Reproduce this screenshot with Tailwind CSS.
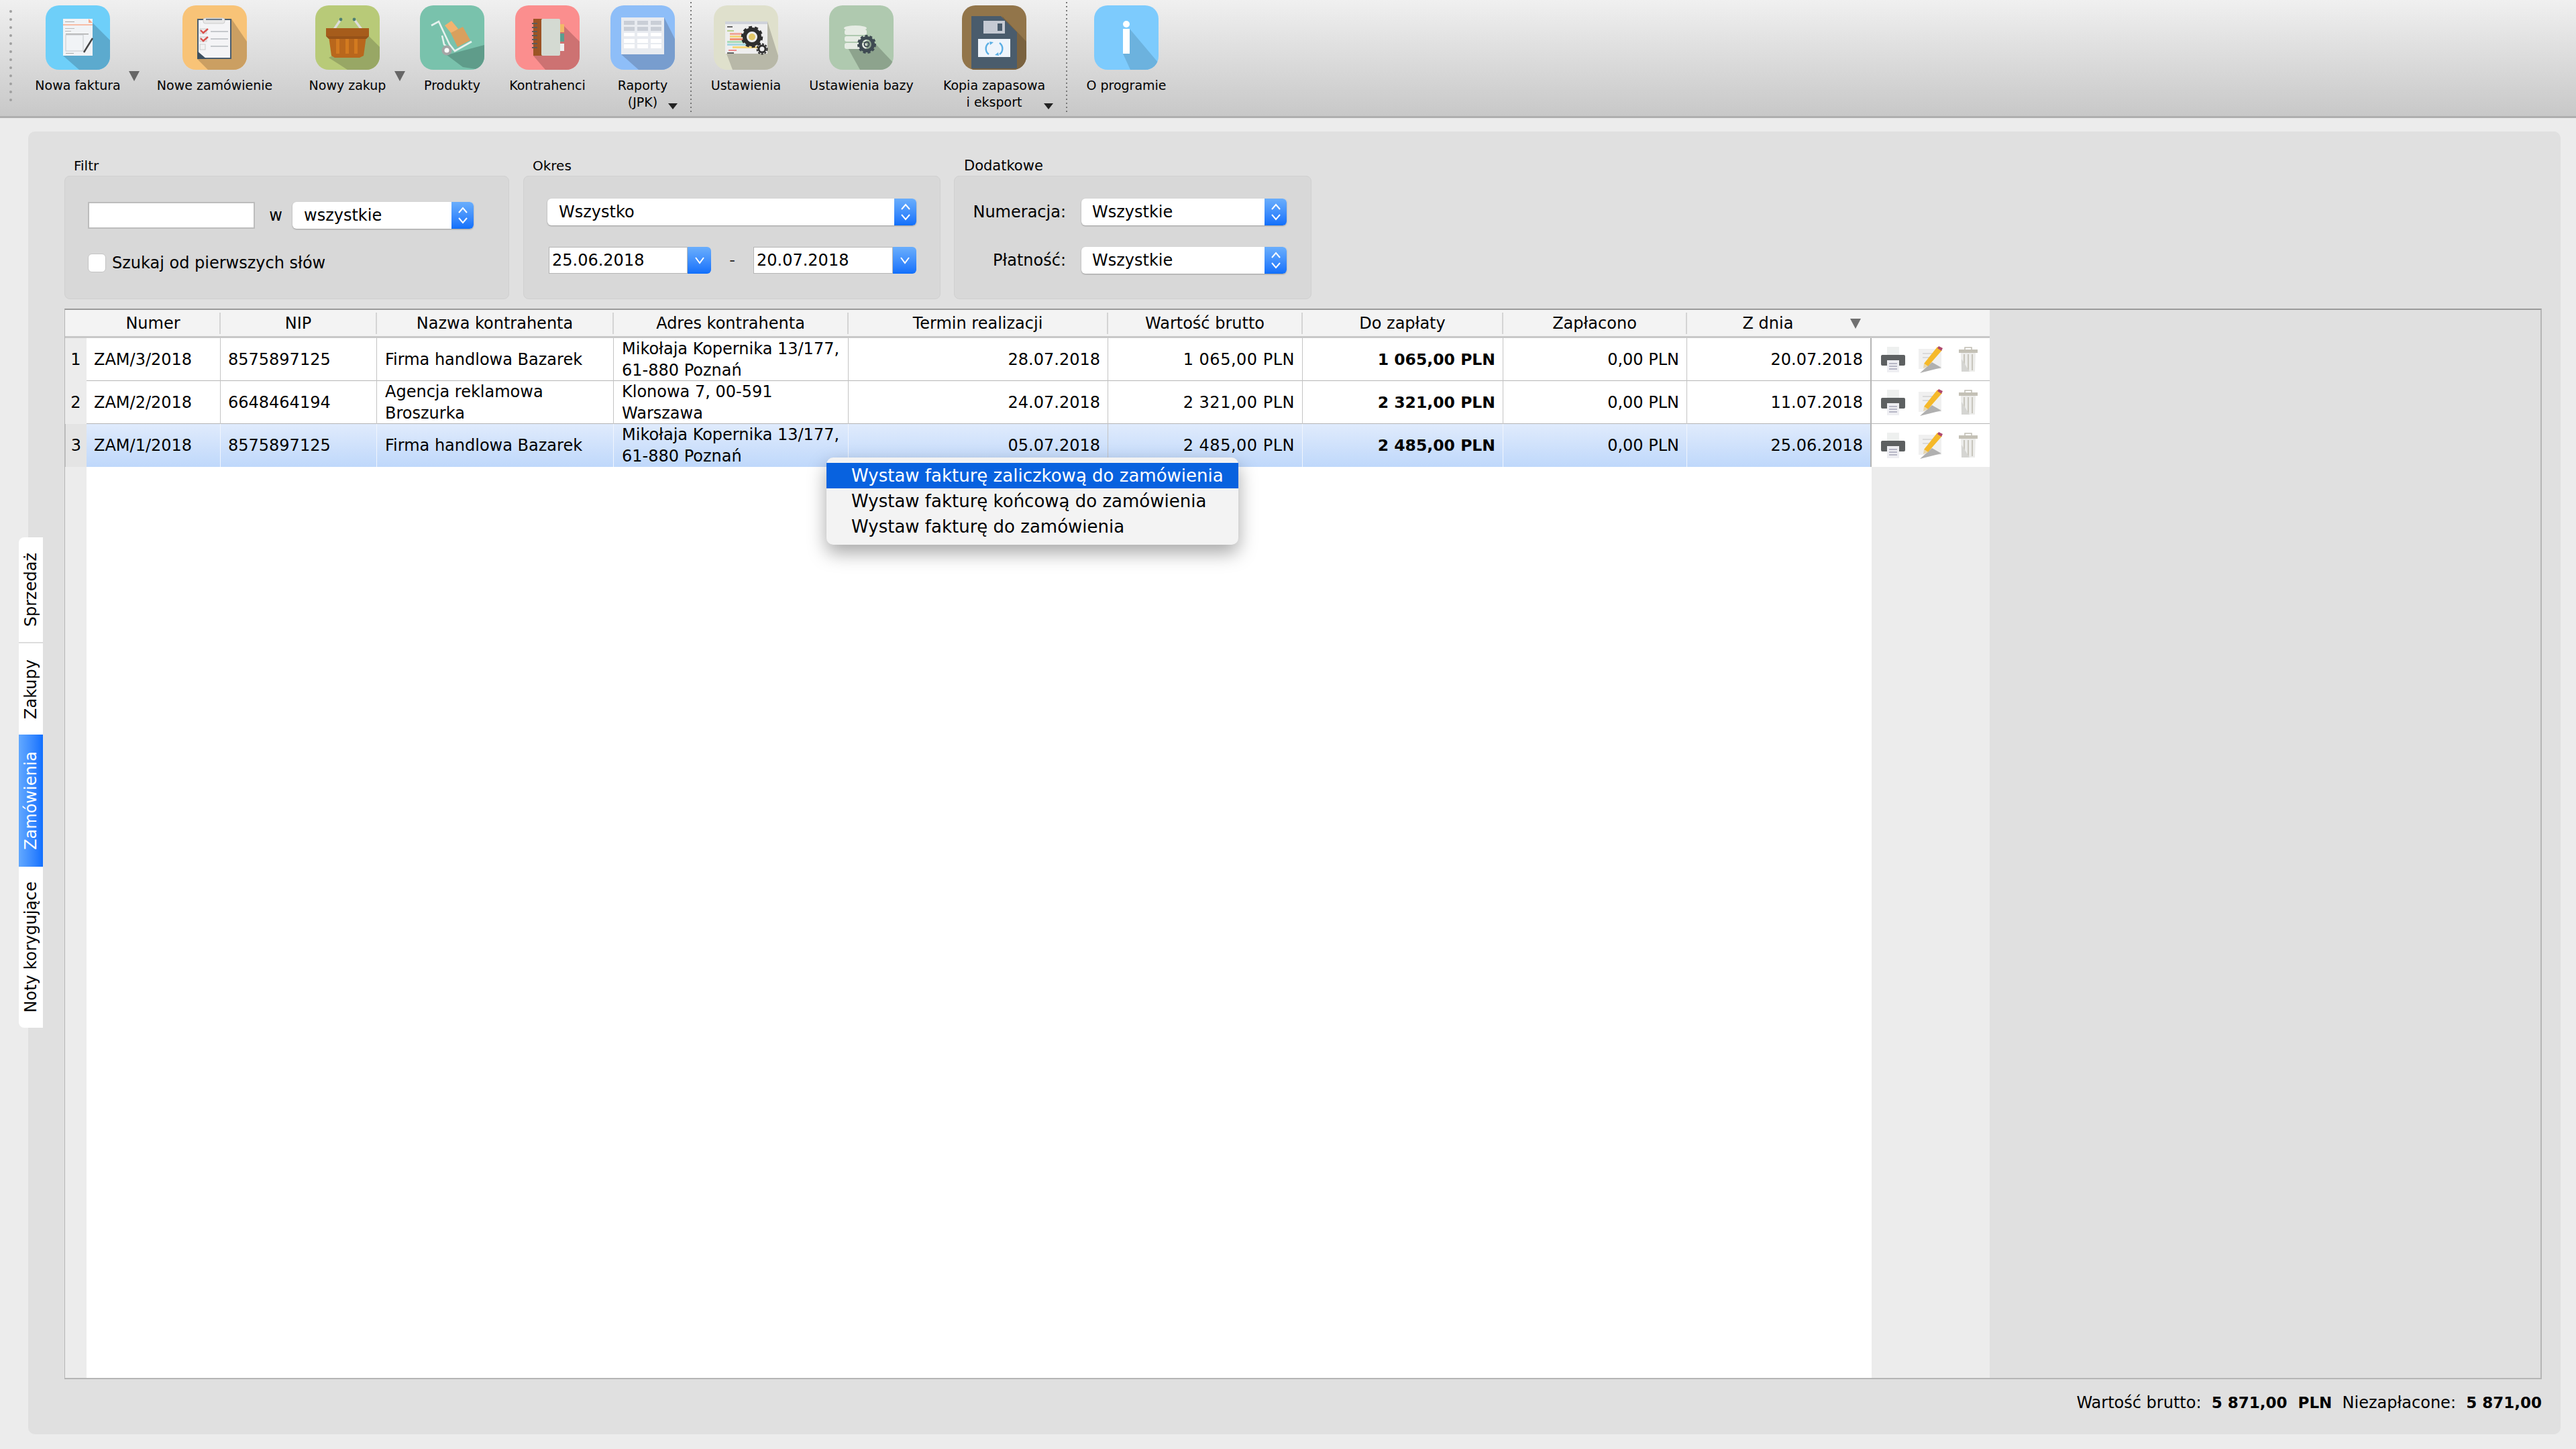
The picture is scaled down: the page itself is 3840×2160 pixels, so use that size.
<!DOCTYPE html>
<html lang="pl">
<head>
<meta charset="utf-8">
<title>Zamówienia</title>
<script src="https://cdn.jsdelivr.net/npm/@tailwindcss/browser@4"></script>
</head>
<body class="w-[3840px] h-[2160px] bg-[#ececec] overflow-hidden font-['DejaVu_Sans',sans-serif] text-[24px] text-black">

<!-- TOOLBAR -->
<div class="flex items-start h-[176px] pl-[14px] pt-[8px] bg-gradient-to-b from-[#f0f0f0] to-[#c8c8c8] border-b-[3px] border-[#aeaeae] text-[19px] leading-[25px]">
  <svg class="w-[4px] h-[140px] mt-[6px]" viewBox="0 0 4 140"><g fill="#a0a0a0"><circle cx="2" cy="3" r="2"/><circle cx="2" cy="15" r="2"/><circle cx="2" cy="27" r="2"/><circle cx="2" cy="39" r="2"/><circle cx="2" cy="51" r="2"/><circle cx="2" cy="63" r="2"/><circle cx="2" cy="75" r="2"/><circle cx="2" cy="87" r="2"/><circle cx="2" cy="99" r="2"/><circle cx="2" cy="111" r="2"/><circle cx="2" cy="123" r="2"/><circle cx="2" cy="135" r="2"/></g></svg>

  <div class="relative w-[96px] ml-[50px] flex flex-col items-center">
    <svg class="w-[96px] h-[96px] rounded-[20px]" viewBox="0 0 96 96"><rect width="96" height="96" fill="#6ecff9"/><polygon points="70,26 96,52 96,96 50,96 26,75" fill="#5caace"/><rect x="26" y="20" width="44" height="55" fill="#f1f3f6"/><polygon points="64,20 70,26 64,26" fill="#f7a88a"/><rect x="26" y="28" width="44" height="2" fill="#f7bda6"/><rect x="29" y="24" width="14" height="1" fill="#aaa"/><rect x="29" y="34" width="14" height="1" fill="#bbb"/><rect x="29" y="38" width="9" height="1" fill="#bbb"/><rect x="30" y="42" width="34" height="1.5" fill="#aaa"/><rect x="30" y="44" width="26" height="24" fill="none" stroke="#c5c8cc"/><rect x="30" y="71" width="12" height="1" fill="#aaa"/><line x1="70" y1="49" x2="57" y2="70" stroke="#444" stroke-width="2.4"/></svg>
    <div class="mt-[11px] whitespace-nowrap text-center">Nowa faktura</div>
    <div class="absolute left-[124px] top-[98px] w-0 h-0 border-l-[8px] border-r-[8px] border-t-[15px] border-l-transparent border-r-transparent border-t-[#666]"></div>
  </div>

  <div class="w-[96px] ml-[108px] flex flex-col items-center">
    <svg class="w-[96px] h-[96px] rounded-[20px]" viewBox="0 0 96 96"><rect width="96" height="96" fill="#f8c377"/><polygon points="73,20 96,54 96,96 38,96 22,80" fill="#cb9f62"/><rect x="23" y="21" width="49" height="58" fill="#f4f4f6" stroke="#4a5d6e" stroke-width="2"/><rect x="31" y="19" width="32" height="8" rx="3" fill="#e8e8e8" stroke="#ccc"/><rect x="35" y="20" width="24" height="2" fill="#6b7b8c"/><rect x="26" y="35" width="10" height="7" fill="#eee" stroke="#ccc"/><rect x="26" y="47" width="10" height="7" fill="#eee" stroke="#ccc"/><rect x="26" y="58" width="8" height="8" fill="#f2f2f2" stroke="#ccc"/><path d="M27 37l4 4 7-6M27 49l4 4 7-6" fill="none" stroke="#d8504c" stroke-width="2.4"/><rect x="42" y="38" width="26" height="2" fill="#c5c8cc"/><rect x="42" y="49" width="26" height="2" fill="#c5c8cc"/><rect x="42" y="60" width="26" height="2" fill="#c5c8cc"/><polygon points="22,68 22,80 36,80" fill="#3d5060"/></svg>
    <div class="mt-[11px] whitespace-nowrap text-center">Nowe zamówienie</div>
  </div>

  <div class="relative w-[96px] ml-[102px] flex flex-col items-center">
    <svg class="w-[96px] h-[96px] rounded-[20px]" viewBox="0 0 96 96"><rect width="96" height="96" fill="#b8ca78"/><polygon points="80,46 96,62 96,96 48,96 20,78" fill="#98a765"/><line x1="27" y1="37" x2="38" y2="21" stroke="#dcdcdc" stroke-width="3.4"/><line x1="70" y1="37" x2="58" y2="21" stroke="#dcdcdc" stroke-width="3.4"/><circle cx="38" cy="21" r="2.4" fill="#4d7f72"/><circle cx="58" cy="21" r="2.4" fill="#4d7f72"/><polygon points="20,46 76,46 72,75 66,78 29,78 24,75" fill="#b9671c"/><rect x="16" y="34" width="64" height="12" fill="#a65c1b"/><polygon points="16,46 80,46 76,50 20,50" fill="#965218"/><rect x="31" y="50" width="5" height="22" fill="#d27a20"/><rect x="45" y="50" width="5" height="22" fill="#d27a20"/><rect x="58" y="50" width="5" height="22" fill="#d27a20"/></svg>
    <div class="mt-[11px] whitespace-nowrap text-center">Nowy zakup</div>
    <div class="absolute left-[118px] top-[98px] w-0 h-0 border-l-[8px] border-r-[8px] border-t-[15px] border-l-transparent border-r-transparent border-t-[#666]"></div>
  </div>

  <div class="w-[96px] ml-[60px] flex flex-col items-center">
    <svg class="w-[96px] h-[96px] rounded-[20px]" viewBox="0 0 96 96"><rect width="96" height="96" fill="#79c2ac"/><polygon points="40,74 96,59 96,91 90,96 64,92" fill="#5f9c8a"/><polygon points="37,30 47,23 57,35 47,42" fill="#f2b36f"/><polygon points="46,41 64,32 75,52 56,62" fill="#d9a05e"/><polyline points="17,30 28,24 44,58 52,68 77,54" fill="none" stroke="#e6f2ee" stroke-width="2.6"/><polyline points="33,45 36,58 44,66" fill="none" stroke="#e6f2ee" stroke-width="2.6"/><circle cx="40" cy="67" r="7.5" fill="#a5a5a5"/><circle cx="40" cy="67" r="3.5" fill="#fff"/></svg>
    <div class="mt-[11px] whitespace-nowrap text-center">Produkty</div>
  </div>

  <div class="w-[96px] ml-[46px] flex flex-col items-center">
    <svg class="w-[96px] h-[96px] rounded-[20px]" viewBox="0 0 96 96"><rect width="96" height="96" fill="#fb8e8e"/><polygon points="70,28 96,54 96,96 45,96 27,75" fill="#cd7272"/><rect x="67" y="28" width="6" height="12" fill="#f2b868"/><rect x="67" y="42" width="6" height="12" fill="#5c9e8f"/><rect x="67" y="57" width="6" height="11" fill="#eeeeee"/><rect x="27" y="20" width="13" height="55" fill="#9c5425"/><rect x="39" y="20" width="28" height="55" rx="2" fill="#d4dad2"/><g stroke="#5d5a58" stroke-width="2"><line x1="25" y1="27" x2="33" y2="27"/><line x1="25" y1="33" x2="33" y2="33"/><line x1="25" y1="39" x2="33" y2="39"/><line x1="25" y1="45" x2="33" y2="45"/><line x1="25" y1="51" x2="33" y2="51"/><line x1="25" y1="57" x2="33" y2="57"/><line x1="25" y1="63" x2="33" y2="63"/></g></svg>
    <div class="mt-[11px] whitespace-nowrap text-center">Kontrahenci</div>
  </div>

  <div class="relative w-[96px] ml-[46px] flex flex-col items-center">
    <svg class="w-[96px] h-[96px] rounded-[20px]" viewBox="0 0 96 96"><rect width="96" height="96" fill="#8ebef8"/><polygon points="80,18 96,50 96,96 42,96 16,73" fill="#789dce"/><rect x="16" y="18" width="64" height="55" fill="#e8ebf0"/><g fill="#c9ced6"><rect x="20" y="23" width="16" height="6"/><rect x="40" y="23" width="16" height="6"/><rect x="60" y="23" width="16" height="6"/><rect x="20" y="32" width="16" height="6"/><rect x="40" y="32" width="16" height="6"/><rect x="60" y="32" width="16" height="6"/></g><g fill="#fff"><rect x="20" y="41" width="16" height="5"/><rect x="40" y="41" width="16" height="5"/><rect x="60" y="41" width="16" height="5"/><rect x="20" y="50" width="16" height="6"/><rect x="40" y="50" width="16" height="6"/><rect x="60" y="50" width="16" height="6"/><rect x="20" y="58" width="16" height="6"/><rect x="40" y="58" width="16" height="6"/><rect x="60" y="58" width="16" height="6"/></g></svg>
    <div class="mt-[11px] text-center">Raporty<br>(JPK)</div>
    <div class="absolute left-[86px] top-[146px] w-0 h-0 border-l-[7px] border-r-[7px] border-t-[9px] border-l-transparent border-r-transparent border-t-[#222]"></div>
  </div>

  <div class="w-[2px] h-[164px] -mt-[5px] ml-[23px] bg-[repeating-linear-gradient(to_bottom,#777_0,#777_2px,transparent_2px,transparent_6px)]"></div>

  <div class="w-[96px] ml-[33px] flex flex-col items-center">
    <svg class="w-[96px] h-[96px] rounded-[20px]" viewBox="0 0 96 96"><rect width="96" height="96" fill="#dfe0cc"/><polygon points="19,72 28,96 96,96 96,75 80,24 80,72" fill="#b8b8a8"/><rect x="17" y="24" width="63" height="48" fill="#eeeeee"/><rect x="17" y="24" width="63" height="4" fill="#cfd2da"/><rect x="20" y="31" width="8" height="2" fill="#666"/><rect x="20" y="37" width="10" height="2" fill="#b8d08a"/><rect x="24" y="41" width="18" height="3" fill="#f0a898"/><rect x="24" y="45" width="18" height="3" fill="#f5d67a"/><rect x="24" y="49" width="22" height="3" fill="#f09070"/><rect x="20" y="53" width="30" height="3" fill="#a8dcb8"/><rect x="20" y="57" width="34" height="3" fill="#a8d8e0"/><rect x="28" y="61" width="40" height="3" fill="#f5d67a"/><rect x="22" y="66" width="12" height="2" fill="#e88"/><rect x="20" y="70" width="10" height="2" fill="#666"/><circle cx="57" cy="47" r="11" fill="none" stroke="#2e2e2e" stroke-width="6"/><circle cx="57" cy="47" r="14.5" fill="none" stroke="#2e2e2e" stroke-width="3.5" stroke-dasharray="5 4"/><circle cx="57" cy="47" r="5" fill="#e3c86a"/><circle cx="72" cy="65" r="5" fill="none" stroke="#2e2e2e" stroke-width="3"/><circle cx="72" cy="65" r="7.5" fill="none" stroke="#2e2e2e" stroke-width="2" stroke-dasharray="3 2"/></svg>
    <div class="mt-[11px] whitespace-nowrap text-center">Ustawienia</div>
  </div>

  <div class="w-[96px] ml-[76px] flex flex-col items-center">
    <svg class="w-[96px] h-[96px] rounded-[20px]" viewBox="0 0 96 96"><rect width="96" height="96" fill="#afc9af"/><polygon points="26,60 46,96 96,96 96,86 64,52" fill="#8da38d"/><g fill="#e6ece4"><ellipse cx="39" cy="34" rx="17" ry="4"/><rect x="23" y="36" width="33" height="8" rx="3"/><rect x="23" y="46" width="33" height="8" rx="3"/><rect x="23" y="56" width="33" height="9" rx="3"/></g><circle cx="56" cy="58" r="9.5" fill="none" stroke="#3e4a52" stroke-width="5"/><circle cx="56" cy="58" r="12.5" fill="none" stroke="#3e4a52" stroke-width="3" stroke-dasharray="4 3"/><circle cx="56" cy="58" r="3.5" fill="none" stroke="#3e4a52" stroke-width="2"/></svg>
    <div class="mt-[11px] whitespace-nowrap text-center">Ustawienia bazy</div>
  </div>

  <div class="relative w-[96px] ml-[102px] flex flex-col items-center">
    <svg class="w-[96px] h-[96px] rounded-[20px]" viewBox="0 0 96 96"><rect width="96" height="96" fill="#92754a"/><polygon points="60,16 96,54 96,96 16,96 14,94 82,94" fill="#7a623f"/><polygon points="14,16 58,16 82,40 82,94 14,94" fill="#4a5c6c"/><rect x="32" y="23" width="32" height="19" fill="#c5cad3"/><rect x="53" y="27" width="7" height="11" fill="#4a5c6c"/><rect x="24" y="50" width="48" height="27" fill="#eef4fb"/><path d="M40 56a10.500 10.500 0 0 0 0 17M56 56a10.500 10.500 0 0 1 0 17" fill="none" stroke="#5aaee4" stroke-width="2.400"/><path d="M41 54l6 1-5 4zM55 75l-6-1 5-4z" fill="#5aaee4"/></svg>
    <div class="mt-[11px] whitespace-nowrap text-center">Kopia zapasowa<br>i eksport</div>
    <div class="absolute left-[122px] top-[146px] w-0 h-0 border-l-[7px] border-r-[7px] border-t-[9px] border-l-transparent border-r-transparent border-t-[#222]"></div>
  </div>

  <div class="w-[2px] h-[164px] -mt-[5px] ml-[59px] bg-[repeating-linear-gradient(to_bottom,#777_0,#777_2px,transparent_2px,transparent_6px)]"></div>

  <div class="w-[96px] ml-[40px] flex flex-col items-center">
    <svg class="w-[96px] h-[96px] rounded-[20px]" viewBox="0 0 96 96"><rect width="96" height="96" fill="#7dcbfd"/><polygon points="53,35 96,86 96,96 54,96 43,72" fill="#6cb2de"/><circle cx="48" cy="28" r="5" fill="#fff"/><rect x="43" y="35" width="10" height="37" fill="#fff"/></svg>
    <div class="mt-[11px] whitespace-nowrap text-center">O programie</div>
  </div>
</div>

<!-- MAIN PANEL -->
<div class="relative flex flex-col w-[3775px] h-[1942px] mt-[20px] ml-[42px] pl-[54px] pt-[39px] bg-[#e0e0e0] rounded-[10px]">

  <!-- side tabs -->
  <div class="absolute left-[-14px] top-[605px] w-[36px] flex flex-col">
    <div class="h-[158px] flex items-center justify-center bg-white rounded-tl-[8px] border-b-2 border-[#dddddd]"><span class="[writing-mode:vertical-rl] rotate-180">Sprzedaż</span></div>
    <div class="h-[136px] flex items-center justify-center bg-white"><span class="[writing-mode:vertical-rl] rotate-180">Zakupy</span></div>
    <div class="h-[197px] flex items-center justify-center bg-gradient-to-r from-[#62a8ff] to-[#0f6fff] text-white"><span class="[writing-mode:vertical-rl] rotate-180">Zamówienia</span></div>
    <div class="h-[240px] flex items-center justify-center bg-white rounded-bl-[8px]"><span class="[writing-mode:vertical-rl] rotate-180 whitespace-nowrap">Noty korygujące</span></div>
  </div>

  <!-- filter groups -->
  <div class="flex items-start">
    <div class="w-[663px]">
      <div class="h-[27px] pl-[14px] text-[20px] leading-[24px]">Filtr</div>
      <div class="h-[184px] pl-[34px] pt-[38px] bg-[#d8d8d8] rounded-[8px] border border-[#d0d0d0]">
        <div class="flex items-center">
          <div class="w-[249px] h-[40px] bg-white border-2 border-[#bdbdbd]"></div>
          <span class="w-[56px] pl-[6px] text-center">w</span>
          <div class="flex w-[270px] h-[40px] bg-white rounded-[6px] shadow-[0_1px_2px_#999]">
            <div class="flex-1 pl-[17px] leading-[40px]">wszystkie</div>
            <div class="w-[33px] flex items-center justify-center rounded-r-[6px] bg-gradient-to-b from-[#6aaefc] to-[#0f6ffb]"><svg class="w-[16px] h-[28px]" viewBox="0 0 16 28" fill="none" stroke="#fff" stroke-width="2"><path d="M2 10l6-7 6 7M2 18l6 7 6-7"/></svg></div>
          </div>
        </div>
        <div class="flex items-center gap-[9px] mt-[33px]">
          <div class="w-[27px] h-[28px] bg-white rounded-[6px] border border-[#c4c4c4]"></div>
          <span>Szukaj od pierwszych słów</span>
        </div>
      </div>
    </div>

    <div class="w-[622px] ml-[21px]">
      <div class="h-[27px] pl-[14px] text-[20px] leading-[24px]">Okres</div>
      <div class="h-[184px] pl-[35px] pt-[33px] bg-[#d8d8d8] rounded-[8px] border border-[#d0d0d0]">
        <div class="flex w-[550px] h-[40px] bg-white rounded-[6px] shadow-[0_1px_2px_#999]">
          <div class="flex-1 pl-[17px] leading-[40px]">Wszystko</div>
          <div class="w-[33px] flex items-center justify-center rounded-r-[6px] bg-gradient-to-b from-[#6aaefc] to-[#0f6ffb]"><svg class="w-[16px] h-[28px]" viewBox="0 0 16 28" fill="none" stroke="#fff" stroke-width="2"><path d="M2 10l6-7 6 7M2 18l6 7 6-7"/></svg></div>
        </div>
        <div class="flex items-center mt-[32px] ml-[2px]">
          <div class="flex w-[242px] h-[40px]">
            <div class="flex-1 pl-[4px] leading-[38px] bg-white border border-[#b5b5b5]">25.06.2018</div>
            <div class="w-[35px] flex items-center justify-center rounded-r-[6px] bg-gradient-to-b from-[#6aaefc] to-[#0f6ffb]"><svg class="w-[16px] h-[12px]" viewBox="0 0 16 12" fill="none" stroke="#fff" stroke-width="2"><path d="M2 2l6 8 6-8"/></svg></div>
          </div>
          <span class="w-[63px] text-center text-[#333]">-</span>
          <div class="flex w-[243px] h-[40px]">
            <div class="flex-1 pl-[4px] leading-[38px] bg-white border border-[#b5b5b5]">20.07.2018</div>
            <div class="w-[35px] flex items-center justify-center rounded-r-[6px] bg-gradient-to-b from-[#6aaefc] to-[#0f6ffb]"><svg class="w-[16px] h-[12px]" viewBox="0 0 16 12" fill="none" stroke="#fff" stroke-width="2"><path d="M2 2l6 8 6-8"/></svg></div>
          </div>
        </div>
      </div>
    </div>

    <div class="w-[533px] ml-[20px]">
      <div class="h-[27px] pl-[15px] text-[21px] leading-[24px]">Dodatkowe</div>
      <div class="h-[184px] pt-[33px] bg-[#d8d8d8] rounded-[8px] border border-[#d0d0d0]">
        <div class="flex items-center">
          <span class="w-[166px] text-right">Numeracja:</span>
          <div class="flex w-[306px] h-[40px] ml-[23px] bg-white rounded-[6px] shadow-[0_1px_2px_#999]">
            <div class="flex-1 pl-[16px] leading-[40px]">Wszystkie</div>
            <div class="w-[33px] flex items-center justify-center rounded-r-[6px] bg-gradient-to-b from-[#6aaefc] to-[#0f6ffb]"><svg class="w-[16px] h-[28px]" viewBox="0 0 16 28" fill="none" stroke="#fff" stroke-width="2"><path d="M2 10l6-7 6 7M2 18l6 7 6-7"/></svg></div>
          </div>
        </div>
        <div class="flex items-center mt-[32px]">
          <span class="w-[166px] text-right">Płatność:</span>
          <div class="flex w-[306px] h-[40px] ml-[23px] bg-white rounded-[6px] shadow-[0_1px_2px_#999]">
            <div class="flex-1 pl-[16px] leading-[40px]">Wszystkie</div>
            <div class="w-[33px] flex items-center justify-center rounded-r-[6px] bg-gradient-to-b from-[#6aaefc] to-[#0f6ffb]"><svg class="w-[16px] h-[28px]" viewBox="0 0 16 28" fill="none" stroke="#fff" stroke-width="2"><path d="M2 10l6-7 6 7M2 18l6 7 6-7"/></svg></div>
          </div>
        </div>
      </div>
    </div>
  </div>

  <!-- table -->
  <div class="flex flex-col w-[3693px] h-[1596px] mt-[14px] border-t-2 border-l border-r-2 border-b-2 border-t-[#9a9a9a] border-l-[#b5b5b5] border-r-[#b5b5b5] border-b-[#b5b5b5] leading-[32px]">
    <!-- header -->
    <div class="grid grid-cols-[32px_200px_233px_353px_350px_387px_290px_299px_274px_275px_176px] w-[2869px] h-[42px] bg-[#f3f3f3] border-b-[3px] border-[#c8c8c8] items-center">
      <div></div>
      <div class="h-[32px] text-center border-r-2 border-[#d4d4d4]">Numer</div>
      <div class="h-[32px] text-center border-r-2 border-[#d4d4d4]">NIP</div>
      <div class="h-[32px] text-center border-r-2 border-[#d4d4d4]">Nazwa kontrahenta</div>
      <div class="h-[32px] text-center border-r-2 border-[#d4d4d4]">Adres kontrahenta</div>
      <div class="h-[32px] text-center border-r-2 border-[#d4d4d4]">Termin realizacji</div>
      <div class="h-[32px] text-center border-r-2 border-[#d4d4d4]">Wartość brutto</div>
      <div class="h-[32px] text-center border-r-2 border-[#d4d4d4]">Do zapłaty</div>
      <div class="h-[32px] text-center border-r-2 border-[#d4d4d4]">Zapłacono</div>
      <div class="relative h-[32px] pr-[34px] text-center">Z dnia<span class="absolute left-[243px] top-[9px] w-0 h-0 border-l-[8px] border-r-[8px] border-t-[15px] border-l-transparent border-r-transparent border-t-[#707070]"></span></div>
      <div></div>
    </div>
    <!-- row 1 -->
    <div class="grid grid-cols-[32px_200px_233px_353px_350px_387px_290px_299px_274px_275px_176px] w-[2869px] h-[64px] border-b border-[#b5b5b5] items-stretch bg-white">
      <div class="flex items-center justify-center bg-[#ececec]">1</div>
      <div class="flex items-center pl-[11px] border-r border-[#c4c4c4]">ZAM/3/2018</div>
      <div class="flex items-center pl-[11px] border-r border-[#c4c4c4]">8575897125</div>
      <div class="flex items-center pl-[12px] border-r border-[#c4c4c4]">Firma handlowa Bazarek</div>
      <div class="flex items-center pl-[12px] border-r border-[#c4c4c4]">Mikołaja Kopernika 13/177,<br>61-880 Poznań</div>
      <div class="flex items-center justify-end pr-[11px] border-r border-[#c4c4c4]">28.07.2018</div>
      <div class="flex items-center justify-end pr-[11px] border-r border-[#c4c4c4] tracking-[0.5px]">1 065,00 PLN</div>
      <div class="flex items-center justify-end pr-[11px] border-r border-[#c4c4c4] font-bold text-[23.5px]">1 065,00 PLN</div>
      <div class="flex items-center justify-end pr-[11px] border-r border-[#c4c4c4]">0,00 PLN</div>
      <div class="flex items-center justify-end pr-[11px] border-r-2 border-[#b5b5b5]">20.07.2018</div>
      <div class="flex items-center pl-[14px] gap-[20px]">
        <svg class="w-[36px] h-[38px]" viewBox="0 0 36 38"><rect x="9" y="0" width="18" height="14" fill="#eef0ef"/><rect x="0" y="12" width="36" height="16" rx="2" fill="#5d6061"/><rect x="9" y="20" width="18" height="18" fill="#eeeef2"/><path d="M12 25h12M12 29h12M12 33h12" stroke="#a5a5b8" stroke-width="1.600"/></svg>
        <svg class="w-[36px] h-[40px]" viewBox="0 0 36 40"><rect x="0" y="4" width="34" height="30" fill="#f0f0f0"/><path d="M6 11h20M6 17h14" stroke="#d2d2d2" stroke-width="1.500"/><polygon points="2,40 20,24 34,32" fill="#b0b0b0"/><polygon points="28,1 35,6 14,30 8,26" fill="#f5b92a"/><polygon points="30,0 36,3 34,7 28,3" fill="#b04a6e"/><polygon points="8,26 14,30 7,33" fill="#e8d5a8"/></svg>
        <svg class="w-[28px] h-[38px] ml-[4px]" viewBox="0 0 28 38"><path d="M9 4V1h10v3" fill="none" stroke="#c0bdb3" stroke-width="1.500"/><rect x="0" y="4" width="28" height="5" fill="#c4c1b6"/><polygon points="3,9 25,9 24,37 4,37" fill="#ececea"/><path d="M8 11v24M14 11v24M20 11v24" stroke="#c8c6bd" stroke-width="2"/><polygon points="4,18 16,37 4,37" fill="#d5d5d2"/></svg>
      </div>
    </div>
    <!-- row 2 -->
    <div class="grid grid-cols-[32px_200px_233px_353px_350px_387px_290px_299px_274px_275px_176px] w-[2869px] h-[64px] border-b border-[#b5b5b5] items-stretch bg-white">
      <div class="flex items-center justify-center bg-[#ececec]">2</div>
      <div class="flex items-center pl-[11px] border-r border-[#c4c4c4]">ZAM/2/2018</div>
      <div class="flex items-center pl-[11px] border-r border-[#c4c4c4]">6648464194</div>
      <div class="flex items-center pl-[12px] border-r border-[#c4c4c4]">Agencja reklamowa<br>Broszurka</div>
      <div class="flex items-center pl-[12px] border-r border-[#c4c4c4]">Klonowa 7, 00-591<br>Warszawa</div>
      <div class="flex items-center justify-end pr-[11px] border-r border-[#c4c4c4]">24.07.2018</div>
      <div class="flex items-center justify-end pr-[11px] border-r border-[#c4c4c4] tracking-[0.5px]">2 321,00 PLN</div>
      <div class="flex items-center justify-end pr-[11px] border-r border-[#c4c4c4] font-bold text-[23.5px]">2 321,00 PLN</div>
      <div class="flex items-center justify-end pr-[11px] border-r border-[#c4c4c4]">0,00 PLN</div>
      <div class="flex items-center justify-end pr-[11px] border-r-2 border-[#b5b5b5]">11.07.2018</div>
      <div class="flex items-center pl-[14px] gap-[20px]">
        <svg class="w-[36px] h-[38px]" viewBox="0 0 36 38"><rect x="9" y="0" width="18" height="14" fill="#eef0ef"/><rect x="0" y="12" width="36" height="16" rx="2" fill="#5d6061"/><rect x="9" y="20" width="18" height="18" fill="#eeeef2"/><path d="M12 25h12M12 29h12M12 33h12" stroke="#a5a5b8" stroke-width="1.600"/></svg>
        <svg class="w-[36px] h-[40px]" viewBox="0 0 36 40"><rect x="0" y="4" width="34" height="30" fill="#f0f0f0"/><path d="M6 11h20M6 17h14" stroke="#d2d2d2" stroke-width="1.500"/><polygon points="2,40 20,24 34,32" fill="#b0b0b0"/><polygon points="28,1 35,6 14,30 8,26" fill="#f5b92a"/><polygon points="30,0 36,3 34,7 28,3" fill="#b04a6e"/><polygon points="8,26 14,30 7,33" fill="#e8d5a8"/></svg>
        <svg class="w-[28px] h-[38px] ml-[4px]" viewBox="0 0 28 38"><path d="M9 4V1h10v3" fill="none" stroke="#c0bdb3" stroke-width="1.500"/><rect x="0" y="4" width="28" height="5" fill="#c4c1b6"/><polygon points="3,9 25,9 24,37 4,37" fill="#ececea"/><path d="M8 11v24M14 11v24M20 11v24" stroke="#c8c6bd" stroke-width="2"/><polygon points="4,18 16,37 4,37" fill="#d5d5d2"/></svg>
      </div>
    </div>
    <!-- row 3 selected -->
    <div class="grid grid-cols-[32px_200px_233px_353px_350px_387px_290px_299px_274px_275px_176px] w-[2869px] h-[64px] border-b border-[#b5b5b5] items-stretch">
      <div class="flex items-center justify-center bg-[#e4e4e4] border-l border-[#c0c0c0]">3</div>
      <div class="flex items-center pl-[11px] border-r border-[#f0f5fd] bg-gradient-to-b from-[#e0ebfc] to-[#bfd8fb]">ZAM/1/2018</div>
      <div class="flex items-center pl-[11px] border-r border-[#f0f5fd] bg-gradient-to-b from-[#e0ebfc] to-[#bfd8fb]">8575897125</div>
      <div class="flex items-center pl-[12px] border-r border-[#f0f5fd] bg-gradient-to-b from-[#e0ebfc] to-[#bfd8fb]">Firma handlowa Bazarek</div>
      <div class="flex items-center pl-[12px] border-r border-[#f0f5fd] bg-gradient-to-b from-[#e0ebfc] to-[#bfd8fb]">Mikołaja Kopernika 13/177,<br>61-880 Poznań</div>
      <div class="flex items-center justify-end pr-[11px] border-r border-[#c4c4c4] bg-gradient-to-b from-[#e0ebfc] to-[#bfd8fb]">05.07.2018</div>
      <div class="flex items-center justify-end pr-[11px] border-r border-[#f0f5fd] tracking-[0.5px] bg-gradient-to-b from-[#e0ebfc] to-[#bfd8fb]">2 485,00 PLN</div>
      <div class="flex items-center justify-end pr-[11px] border-r border-[#f0f5fd] font-bold text-[23.5px] bg-gradient-to-b from-[#e0ebfc] to-[#bfd8fb]">2 485,00 PLN</div>
      <div class="flex items-center justify-end pr-[11px] border-r border-[#f0f5fd] bg-gradient-to-b from-[#e0ebfc] to-[#bfd8fb]">0,00 PLN</div>
      <div class="flex items-center justify-end pr-[11px] border-r-2 border-[#b5b5b5] bg-gradient-to-b from-[#e0ebfc] to-[#bfd8fb]">25.06.2018</div>
      <div class="flex items-center pl-[14px] gap-[20px] bg-white">
        <svg class="w-[36px] h-[38px]" viewBox="0 0 36 38"><rect x="9" y="0" width="18" height="14" fill="#eef0ef"/><rect x="0" y="12" width="36" height="16" rx="2" fill="#5d6061"/><rect x="9" y="20" width="18" height="18" fill="#eeeef2"/><path d="M12 25h12M12 29h12M12 33h12" stroke="#a5a5b8" stroke-width="1.600"/></svg>
        <svg class="w-[36px] h-[40px]" viewBox="0 0 36 40"><rect x="0" y="4" width="34" height="30" fill="#f0f0f0"/><path d="M6 11h20M6 17h14" stroke="#d2d2d2" stroke-width="1.500"/><polygon points="2,40 20,24 34,32" fill="#b0b0b0"/><polygon points="28,1 35,6 14,30 8,26" fill="#f5b92a"/><polygon points="30,0 36,3 34,7 28,3" fill="#b04a6e"/><polygon points="8,26 14,30 7,33" fill="#e8d5a8"/></svg>
        <svg class="w-[28px] h-[38px] ml-[4px]" viewBox="0 0 28 38"><path d="M9 4V1h10v3" fill="none" stroke="#c0bdb3" stroke-width="1.500"/><rect x="0" y="4" width="28" height="5" fill="#c4c1b6"/><polygon points="3,9 25,9 24,37 4,37" fill="#ececea"/><path d="M8 11v24M14 11v24M20 11v24" stroke="#c8c6bd" stroke-width="2"/><polygon points="4,18 16,37 4,37" fill="#d5d5d2"/></svg>
      </div>
    </div>
    <!-- empty area -->
    <div class="flex flex-1 w-[2869px]">
      <div class="w-[32px] bg-[#ececec]"></div>
      <div class="w-[2661px] bg-white"></div>
      <div class="w-[176px] bg-[#ececec]"></div>
    </div>
  </div>

  <!-- footer totals -->
  <div class="flex justify-end items-baseline w-[3693px] mt-[21px] whitespace-pre leading-[28px]">Wartość brutto:  <b class="text-[23px]">5 871,00  PLN</b>  Niezapłacone:  <b class="text-[23px]">5 871,00</b></div>

  <!-- context menu -->
  <div class="absolute left-[1190px] top-[486px] w-[614px] h-[130px] pt-[8px] bg-[#f3f3f3] rounded-[10px] shadow-[0_12px_28px_rgba(0,0,0,0.35)] text-[26px] leading-[38px]">
    <div class="h-[38px] pl-[37px] bg-[#0862df] text-white">Wystaw fakturę zaliczkową do zamówienia</div>
    <div class="h-[38px] pl-[37px]">Wystaw fakturę końcową do zamówienia</div>
    <div class="h-[38px] pl-[37px]">Wystaw fakturę do zamówienia</div>
  </div>
</div>
</body>
</html>
